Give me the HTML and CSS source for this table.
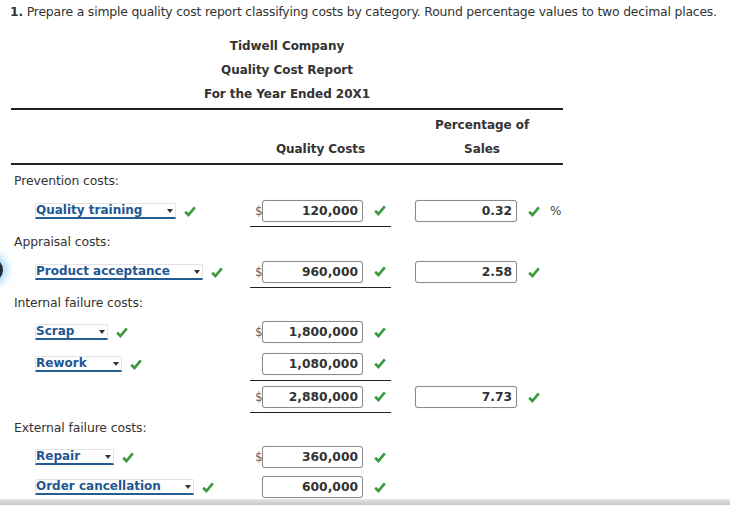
FILE: index.html
```html
<!DOCTYPE html>
<html>
<head>
<meta charset="utf-8">
<link rel="stylesheet" href="styles.css">
</head>
<body>
<div class="page">
  <p class="intro"><b>1.</b> Prepare a simple quality cost report classifying costs by category. Round percentage values to two decimal places.</p>

  <div class="report">
    <div class="heading">
      <div>Tidwell Company</div>
      <div>Quality Cost Report</div>
      <div>For the Year Ended 20X1</div>
    </div>

    <div class="row hdr">
      <div class="cell"></div>
      <div class="cell hcell">Quality Costs</div>
      <div class="cell hcell hpct">Percentage of<br>Sales</div>
    </div>

    <div class="row r30">
      <div class="cell label">Prevention costs:</div>
      <div class="cell"></div><div class="cell"></div>
    </div>
    <div class="row r32">
      <div class="cell item"><span class="sel w140">Quality training<i class="arr"></i></span><svg class="ok" viewBox="0 0 12 11"><path d="M1.2 5.8 L4.4 9 L10.8 1.4"/></svg></div>
      <div class="cell cost ul"><span class="dol">$</span><span class="box">120,000</span><svg class="ok" viewBox="0 0 12 11"><path d="M1.2 5.8 L4.4 9 L10.8 1.4"/></svg></div>
      <div class="cell pct"><span class="box pbox">0.32</span><svg class="ok" viewBox="0 0 12 11"><path d="M1.2 5.8 L4.4 9 L10.8 1.4"/></svg><span class="perc">%</span></div>
    </div>

    <div class="row r29">
      <div class="cell label">Appraisal costs:</div>
      <div class="cell"></div><div class="cell"></div>
    </div>
    <div class="row r32">
      <div class="cell item"><span class="sel w167">Product acceptance<i class="arr"></i></span><svg class="ok" viewBox="0 0 12 11"><path d="M1.2 5.8 L4.4 9 L10.8 1.4"/></svg></div>
      <div class="cell cost ul"><span class="dol">$</span><span class="box">960,000</span><svg class="ok" viewBox="0 0 12 11"><path d="M1.2 5.8 L4.4 9 L10.8 1.4"/></svg></div>
      <div class="cell pct"><span class="box pbox">2.58</span><svg class="ok" viewBox="0 0 12 11"><path d="M1.2 5.8 L4.4 9 L10.8 1.4"/></svg></div>
    </div>

    <div class="row r29">
      <div class="cell label">Internal failure costs:</div>
      <div class="cell"></div><div class="cell"></div>
    </div>
    <div class="row r30">
      <div class="cell item"><span class="sel w72">Scrap<i class="arr"></i></span><svg class="ok" viewBox="0 0 12 11"><path d="M1.2 5.8 L4.4 9 L10.8 1.4"/></svg></div>
      <div class="cell cost"><span class="dol">$</span><span class="box">1,800,000</span><svg class="ok" viewBox="0 0 12 11"><path d="M1.2 5.8 L4.4 9 L10.8 1.4"/></svg></div>
      <div class="cell"></div>
    </div>
    <div class="row r34">
      <div class="cell item"><span class="sel w86">Rework<i class="arr"></i></span><svg class="ok" viewBox="0 0 12 11"><path d="M1.2 5.8 L4.4 9 L10.8 1.4"/></svg></div>
      <div class="cell cost ul"><span class="dol"></span><span class="box">1,080,000</span><svg class="ok" viewBox="0 0 12 11"><path d="M1.2 5.8 L4.4 9 L10.8 1.4"/></svg></div>
      <div class="cell"></div>
    </div>
    <div class="row r32">
      <div class="cell"></div>
      <div class="cell cost ul"><span class="dol">$</span><span class="box">2,880,000</span><svg class="ok" viewBox="0 0 12 11"><path d="M1.2 5.8 L4.4 9 L10.8 1.4"/></svg></div>
      <div class="cell pct"><span class="box pbox">7.73</span><svg class="ok" viewBox="0 0 12 11"><path d="M1.2 5.8 L4.4 9 L10.8 1.4"/></svg></div>
    </div>

    <div class="row r29">
      <div class="cell label">External failure costs:</div>
      <div class="cell"></div><div class="cell"></div>
    </div>
    <div class="row r30">
      <div class="cell item"><span class="sel w78">Repair<i class="arr"></i></span><svg class="ok" viewBox="0 0 12 11"><path d="M1.2 5.8 L4.4 9 L10.8 1.4"/></svg></div>
      <div class="cell cost"><span class="dol">$</span><span class="box">360,000</span><svg class="ok" viewBox="0 0 12 11"><path d="M1.2 5.8 L4.4 9 L10.8 1.4"/></svg></div>
      <div class="cell"></div>
    </div>
    <div class="row r30">
      <div class="cell item"><span class="sel w158">Order cancellation<i class="arr"></i></span><svg class="ok" viewBox="0 0 12 11"><path d="M1.2 5.8 L4.4 9 L10.8 1.4"/></svg></div>
      <div class="cell cost"><span class="dol"></span><span class="box">600,000</span><svg class="ok" viewBox="0 0 12 11"><path d="M1.2 5.8 L4.4 9 L10.8 1.4"/></svg></div>
      <div class="cell"></div>
    </div>
  </div>
</div>
<div class="focus-dot"></div>
<div class="bottom-shade"></div>
</body>
</html>
```

FILE: styles.css
```css
html, body {
  margin: 0;
  padding: 0;
  background: #fff;
}
body {
  font-family: "DejaVu Sans", Verdana, sans-serif;
  font-size: 12.4px;
  letter-spacing: -0.1px;
  color: #333;
  width: 730px;
  height: 505px;
  overflow: hidden;
  position: relative;
}
.page {
  padding-left: 10px;
}
.intro {
  margin: 0;
  padding-top: 3px;
  line-height: 18px;
  white-space: nowrap;
  letter-spacing: -0.19px;
}
.intro b {
  font-weight: bold;
}
.report {
  width: 552px;
  margin-left: 1px;
}
.heading {
  margin-top: 13px;
  margin-bottom: 2px;
  text-align: center;
  font-weight: bold;
  font-size: 12px;
  letter-spacing: -0.05px;
  line-height: 24px;
}
.row {
  display: grid;
  grid-template-columns: 239px 141px 172px;
}
.cell {
  display: flex;
  align-items: center;
  box-sizing: border-box;
  min-width: 0;
}
.hdr {
  border-top: 2px solid #222;
  border-bottom: 2px solid #222;
}
.hdr .cell {
  padding-top: 3px;
  padding-bottom: 2px;
  line-height: 24px;
}
.hcell {
  justify-content: center;
  align-items: flex-end;
  text-align: center;
  font-weight: bold;
  font-size: 12px;
  letter-spacing: -0.05px;
}
.hdr .hpct {
  padding-left: 10px;
}
.r29 { height: 29px; }
.r30 { height: 30px; }
.r32 { height: 32px; }
.r34 { height: 34px; }
.label {
  padding-left: 3px;
}
.item {
  padding-left: 24px;
}
.ul {
  border-bottom: 1px solid #222;
}
.cost {
  padding-left: 5px;
}
.dol {
  width: 7px;
  color: #666;
  font-size: 12px;
}
.box {
  box-sizing: border-box;
  width: 101px;
  height: 22px;
  border: 1px solid #8a8a8a;
  border-radius: 3px;
  box-shadow: 0 0 1px rgba(0,0,0,0.25);
  background: #fff;
  font-weight: bold;
  font-size: 12.3px;
  letter-spacing: 0;
  text-align: right;
  line-height: 20px;
  padding-right: 4px;
  color: #333;
}
.pct {
  padding-left: 24px;
}
.pbox {
  width: 102px;
}
.ok {
  width: 12px;
  height: 11px;
  margin-left: 11px;
  flex: none;
}
.ok path {
  fill: none;
  stroke: #3a9a3c;
  stroke-width: 2.7;
  stroke-linecap: butt;
  stroke-linejoin: miter;
}
.item .ok {
  margin-left: 8px;
}
.perc {
  margin-left: 10px;
  color: #444;
  font-size: 12px;
}
.sel {
  display: inline-flex;
  align-items: center;
  justify-content: space-between;
  box-sizing: border-box;
  height: 16px;
  border: 1px solid #e2e2e2;
  border-bottom: 2px solid #235d91;
  border-radius: 2px 2px 0 0;
  background: #fff;
  color: #1f5792;
  font-weight: bold;
  font-size: 12px;
  letter-spacing: 0;
  line-height: 13px;
  padding-left: 0;
  padding-right: 2px;
  white-space: nowrap;
}
.arr {
  display: block;
  width: 0;
  height: 0;
  border-left: 3px solid transparent;
  border-right: 3px solid transparent;
  border-top: 4px solid #333;
}
.w140 { width: 141px; }
.w167 { width: 168px; }
.w72 { width: 73px; }
.w86 { width: 87px; }
.w78 { width: 79px; }
.w158 { width: 159px; }
.focus-dot {
  position: absolute;
  left: -21px;
  top: 258px;
  width: 24px;
  height: 24px;
  border-radius: 50%;
  background: #2b2b2b;
  box-shadow: 0 0 7px 5px rgba(110, 195, 255, 0.5);
}
.bottom-shade {
  position: absolute;
  left: 0;
  right: 0;
  bottom: 0;
  height: 6px;
  background: linear-gradient(to bottom, #e6e6e6, #c4c4c4);
}
```
